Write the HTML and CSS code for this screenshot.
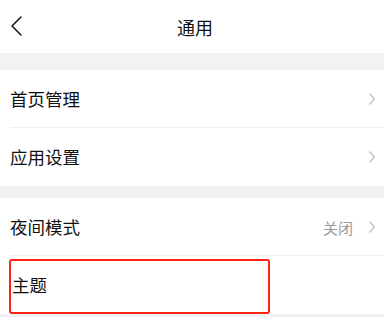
FILE: index.html
```html
<!DOCTYPE html>
<html lang="zh">
<head>
<meta charset="utf-8">
<link rel="stylesheet" href="styles.css">
</head>
<body>
<div class="page">
  <header class="nav">
    <svg class="back" width="14" height="22" viewBox="0 0 14 22"><path d="M11 2 L2 11 L11 20" fill="none" stroke="#1a1a1a" stroke-width="1.6" stroke-linecap="round" stroke-linejoin="round"/></svg>
    <div class="title">通用</div>
  </header>
  <div class="gap gap-lg"></div>
  <section class="group">
    <div class="row sep"><span class="label">首页管理</span><span class="right"><svg class="chev" width="8" height="14" viewBox="0 0 8 14"><path d="M1.5 1.5 L6.5 7 L1.5 12.5" fill="none" stroke="#bdbdbd" stroke-width="1.2"/></svg></span></div>
    <div class="row"><span class="label">应用设置</span><span class="right"><svg class="chev" width="8" height="14" viewBox="0 0 8 14"><path d="M1.5 1.5 L6.5 7 L1.5 12.5" fill="none" stroke="#bdbdbd" stroke-width="1.2"/></svg></span></div>
  </section>
  <div class="gap gap-sm"></div>
  <section class="group">
    <div class="row sep"><span class="label">夜间模式</span><span class="right"><span class="value">关闭</span><svg class="chev" width="8" height="14" viewBox="0 0 8 14"><path d="M1.5 1.5 L6.5 7 L1.5 12.5" fill="none" stroke="#bdbdbd" stroke-width="1.2"/></svg></span></div>
    <div class="row row-last"><span class="label">主题</span><div class="highlight"></div></div>
  </section>
</div>
</body>
</html>
```
FILE: styles.css
```css
html, body {
  margin: 0;
  padding: 0;
  background: #f2f2f4;
}
body {
  font-family: "Noto Sans CJK SC", "Noto Sans", sans-serif;
  color: #111;
  width: 384px;
  height: 317px;
  overflow: hidden;
}
.nav {
  height: 53px;
  background: #fff;
  display: flex;
  align-items: center;
  justify-content: center;
  position: relative;
}
.back {
  position: absolute;
  left: 10px;
  top: 15px;
}
.title {
  font-size: 18px;
  color: #111;
  line-height: 1;
  margin-left: 6px;
}
.gap-lg { height: 17px; }
.gap-sm { height: 12px; }
.group {
  background: #fff;
}
.row {
  height: 58px;
  display: flex;
  align-items: center;
  justify-content: space-between;
  padding: 0 8px 0 10px;
  position: relative;
  box-sizing: border-box;
}
.row.sep::after {
  content: "";
  position: absolute;
  left: 10px;
  right: 0;
  bottom: 0;
  height: 1px;
  background: #f0f0f0;
}
.label {
  font-size: 17.5px;
  line-height: 1;
  letter-spacing: 0;
}
.right {
  display: flex;
  align-items: center;
  gap: 15px;
}
.value {
  font-size: 15px;
  color: #9a9a9a;
  line-height: 1;
}
.chev { display: block; }
.row-last {
  padding-left: 12px;
}
.highlight {
  position: absolute;
  left: 9px;
  top: 3px;
  width: 261px;
  height: 55px;
  box-sizing: border-box;
  border: 2.5px solid #ff2316;
  border-radius: 3px;
}
```
